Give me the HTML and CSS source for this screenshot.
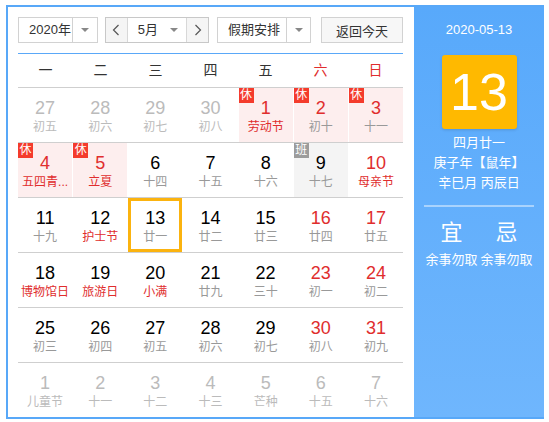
FILE: index.html
```html
<!DOCTYPE html>
<html lang="zh">
<head>
    <meta charset="UTF-8" />
    <title>万年历</title>
    <link rel="stylesheet" href="styles.css">
</head>
<body>
    <!-- 日历 시작 -->
    <div class="calendar">
        <div class="cal-main">
            <div class="cal-toolbar">
                <div class="select select-year">
                    <span class="select-text">2020年</span>
                    <span class="select-arrow"><i class="caret"></i></span>
                </div>
                <div class="month-group">
                    <span class="month-btn">
                        <svg width="8" height="12" viewBox="0 0 8 12"><polyline points="6.5,1 1.5,6 6.5,11" fill="none" stroke="#555" stroke-width="1.2" /></svg>
                    </span>
                    <div class="month-select">
                        <span class="select-text">5月</span>
                        <i class="caret"></i>
                    </div>
                    <span class="month-btn">
                        <svg width="8" height="12" viewBox="0 0 8 12"><polyline points="1.5,1 6.5,6 1.5,11" fill="none" stroke="#555" stroke-width="1.2" /></svg>
                    </span>
                </div>
                <div class="select select-holiday">
                    <span class="select-text">假期安排</span>
                    <span class="select-arrow"><i class="caret"></i></span>
                </div>
                <button type="button" class="btn-today">返回今天</button>
            </div>

            <div class="week-head">
                <span>一</span>
                <span>二</span>
                <span>三</span>
                <span>四</span>
                <span>五</span>
                <span class="weekend">六</span>
                <span class="weekend">日</span>
            </div>

            <div class="days">
                <div class="row">
                    <div class="day other"><b>27</b><em>初五</em></div>
                    <div class="day other"><b>28</b><em>初六</em></div>
                    <div class="day other"><b>29</b><em>初七</em></div>
                    <div class="day other"><b>30</b><em>初八</em></div>
                    <div class="day rest red"><i class="tag">休</i><b>1</b><em class="fest">劳动节</em></div>
                    <div class="day rest red"><i class="tag">休</i><b>2</b><em>初十</em></div>
                    <div class="day rest red"><i class="tag">休</i><b>3</b><em>十一</em></div>
                </div>
                <div class="row">
                    <div class="day rest red"><i class="tag">休</i><b>4</b><em class="fest" title="五四青年节">五四青...</em></div>
                    <div class="day rest red"><i class="tag">休</i><b>5</b><em class="fest">立夏</em></div>
                    <div class="day"><b>6</b><em>十四</em></div>
                    <div class="day"><b>7</b><em>十五</em></div>
                    <div class="day"><b>8</b><em>十六</em></div>
                    <div class="day work"><i class="tag">班</i><b>9</b><em>十七</em></div>
                    <div class="day red"><b>10</b><em class="fest">母亲节</em></div>
                </div>
                <div class="row">
                    <div class="day"><b>11</b><em>十九</em></div>
                    <div class="day"><b>12</b><em class="fest">护士节</em></div>
                    <div class="day today"><b>13</b><em>廿一</em></div>
                    <div class="day"><b>14</b><em>廿二</em></div>
                    <div class="day"><b>15</b><em>廿三</em></div>
                    <div class="day red"><b>16</b><em>廿四</em></div>
                    <div class="day red"><b>17</b><em>廿五</em></div>
                </div>
                <div class="row">
                    <div class="day"><b>18</b><em class="fest">博物馆日</em></div>
                    <div class="day"><b>19</b><em class="fest">旅游日</em></div>
                    <div class="day"><b>20</b><em class="fest">小满</em></div>
                    <div class="day"><b>21</b><em>廿九</em></div>
                    <div class="day"><b>22</b><em>三十</em></div>
                    <div class="day red"><b>23</b><em>初一</em></div>
                    <div class="day red"><b>24</b><em>初二</em></div>
                </div>
                <div class="row">
                    <div class="day"><b>25</b><em>初三</em></div>
                    <div class="day"><b>26</b><em>初四</em></div>
                    <div class="day"><b>27</b><em>初五</em></div>
                    <div class="day"><b>28</b><em>初六</em></div>
                    <div class="day"><b>29</b><em>初七</em></div>
                    <div class="day red"><b>30</b><em>初八</em></div>
                    <div class="day red"><b>31</b><em>初九</em></div>
                </div>
                <div class="row">
                    <div class="day other"><b>1</b><em>儿童节</em></div>
                    <div class="day other"><b>2</b><em>十一</em></div>
                    <div class="day other"><b>3</b><em>十二</em></div>
                    <div class="day other"><b>4</b><em>十三</em></div>
                    <div class="day other"><b>5</b><em>芒种</em></div>
                    <div class="day other"><b>6</b><em>十五</em></div>
                    <div class="day other"><b>7</b><em>十六</em></div>
                </div>
            </div>
        </div>

        <!-- 오른쪽 정보 -->
        <div class="cal-side">
            <div class="side-date">2020-05-13</div>
            <div class="side-day">13</div>
            <div class="side-line">四月廿一</div>
            <div class="side-line">庚子年【鼠年】</div>
            <div class="side-line">辛巳月 丙辰日</div>
            <div class="side-divider"></div>
            <div class="side-yiji">
                <div class="yiji-col">
                    <strong>宜</strong>
                    <span>余事勿取</span>
                </div>
                <div class="yiji-col">
                    <strong>忌</strong>
                    <span>余事勿取</span>
                </div>
            </div>
        </div>
    </div>
</body>
</html>
```

FILE: styles.css
```css
* {
    box-sizing:border-box;
}
body {
    margin:0;
    background:#fff;
    font-family:"Liberation Sans", "Noto Sans CJK SC", sans-serif;
    color:#333;
}
.calendar {
    display:flex;
    width:538px;
    height:414px;
    margin:5px 0 0 6px;
    border:2px solid #58a8f8;
    border-right:none;
}
.cal-main {
    width:406px;
    padding:10px 11px 0 10px;
    background:#fff;
}

/* 툴바 */
.cal-toolbar {
    display:flex;
    height:26px;
    font-size:13px;
}
.select {
    display:flex;
    border:1px solid #d2d2d2;
    background:#fff;
}
.select-text {
    flex:1;
    line-height:24px;
    padding-left:10px;
}
.select-arrow {
    display:flex;
    align-items:center;
    justify-content:center;
    width:25px;
    border-left:1px solid #d2d2d2;
}
.caret {
    display:block;
    width:0;
    height:0;
    border-left:4px solid transparent;
    border-right:4px solid transparent;
    border-top:4px solid #888;
}
.select-year {
    width:80px;
}
.month-group {
    display:flex;
    width:104px;
    margin-left:7px;
    border:1px solid #c8c8c8;
}
.month-btn {
    display:flex;
    align-items:center;
    justify-content:center;
    width:21px;
    background:#f5f5f5;
}
.month-select {
    display:flex;
    align-items:center;
    width:61px;
    border-left:1px solid #d8d8d8;
    border-right:1px solid #d8d8d8;
    padding-right:8px;
}
.month-select .select-text {
    padding-left:10px;
}
.select-holiday {
    width:94px;
    margin-left:8px;
}
.select-holiday .select-arrow {
    width:24px;
}
.btn-today {
    width:82px;
    margin-left:10px;
    padding:0;
    border:1px solid #d2d2d2;
    background:#f7f7f7;
    font-family:inherit;
    font-size:13px;
    color:#333;
}

/* 요일 */
.week-head {
    display:grid;
    grid-template-columns:repeat(7, 1fr);
    margin-top:10px;
    border-top:1px solid #5aa8f8;
    height:34px;
    font-size:14px;
    line-height:33px;
    text-align:center;
}
.weekend {
    color:#e02d2d;
}

/* 날짜 */
.row {
    display:grid;
    grid-template-columns:repeat(7, 1fr);
    column-gap:1px;
    border-top:1px solid #cfcfcf;
}
.day {
    position:relative;
    height:54px;
    padding:9px 2px 0;
    text-align:center;
    overflow:hidden;
}
.day b {
    display:block;
    font-weight:normal;
    font-size:18px;
    line-height:22px;
    color:#000;
}
.day em {
    display:block;
    font-style:normal;
    font-size:12px;
    line-height:16px;
    color:#999;
    white-space:nowrap;
}
.day .fest {
    color:#e02d2d;
}
.red b {
    color:#e02d2d;
}
.other b,
.other em {
    color:#bbb;
}
.rest {
    background:#fdeeee;
}
.work {
    background:#f4f4f4;
}
.tag {
    position:absolute;
    left:0;
    top:0;
    width:15px;
    height:15px;
    background:#f43b2c;
    color:#fff;
    font-style:normal;
    font-size:12px;
    line-height:15px;
    text-align:center;
}
.work .tag {
    background:#9c9c9c;
}
.today {
    box-shadow:inset 0 0 0 3px #fbb30f;
}

/* 오른쪽 */
.cal-side {
    width:130px;
    background:linear-gradient(#58a9fb, #6fb6fd);
    color:#fff;
    text-align:center;
}
.side-date {
    margin-top:13px;
    font-size:13px;
    line-height:20px;
}
.side-day {
    width:75px;
    height:74px;
    margin:15px auto 0;
    border-radius:3px;
    background:#ffb900;
    box-shadow:0 1px 3px rgba(0,0,0,0.15);
    font-size:52px;
    line-height:74px;
}
.side-line {
    font-size:13px;
    line-height:20px;
}
.side-day + .side-line {
    margin-top:4px;
}
.side-divider {
    height:2px;
    margin:12px 10px 0;
    background:rgba(255,255,255,0.45);
}
.side-yiji {
    display:flex;
    margin:11px 10px 0;
}
.yiji-col {
    width:55px;
}
.yiji-col strong {
    display:block;
    font-weight:normal;
    font-size:22px;
    line-height:30px;
}
.yiji-col span {
    display:block;
    margin-top:3px;
    font-size:13px;
    line-height:18px;
    white-space:nowrap;
}
```
